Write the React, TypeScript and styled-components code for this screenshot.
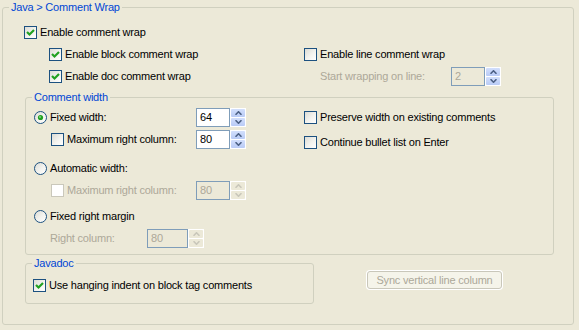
import React from "react";
import styled, { createGlobalStyle } from "styled-components";

const GlobalStyle = createGlobalStyle`
  html, body {
    margin: 0;
    padding: 0;
    background: #ece9d8;
  }
  body {
    font-family: "Liberation Sans", Arial, sans-serif;
    font-size: 11px;
    color: #000;
  }
`;

const Window = styled.div`
  padding: 1px 0 0 2px;
`;

// group box with blue title
const Group = styled.fieldset<{ $w: number }>`
  box-sizing: border-box;
  width: ${(p) => p.$w}px;
  margin: 0;
  padding: 0;
  min-width: 0;
  border: 1px solid #d0d0bf;
  border-radius: 3px;
`;

const Legend = styled.legend`
  margin-left: 6px;
  padding: 0 2px;
  line-height: 13px;
  color: #0046d5;
  letter-spacing: -0.2px;
`;

const OuterBody = styled.div`
  padding: 7px 0 20px 21px;
`;

const TopGrid = styled.div`
  display: grid;
  grid-template-columns: 280px 1fr;
`;

const Column = styled.div`
  display: flex;
  flex-direction: column;
`;

const WidthGroup = styled(Group)`
  margin: 4px 0 0 1px;
`;

const WidthBody = styled.div`
  display: grid;
  grid-template-columns: 270px 1fr;
  padding: 2px 0 5px 8px;
`;

const Row = styled.div<{ $indent?: number; $mt?: number }>`
  display: flex;
  align-items: center;
  height: 22px;
  padding-left: ${(p) => p.$indent ?? 0}px;
  margin-top: ${(p) => p.$mt ?? 0}px;
`;

const Lead = styled.div<{ $w: number }>`
  display: flex;
  align-items: center;
  width: ${(p) => p.$w}px;
`;

const Label = styled.span<{ $disabled?: boolean }>`
  margin-left: 3px;
  white-space: nowrap;
  letter-spacing: -0.2px;
  color: ${(p) => (p.$disabled ? "#aca899" : "#000")};
`;

const PlainLabel = styled(Label)`
  margin-left: 0;
`;

const Box = styled.span<{ $disabled?: boolean; $round?: boolean }>`
  box-sizing: border-box;
  display: inline-flex;
  align-items: center;
  justify-content: center;
  flex: none;
  width: 13px;
  height: 13px;
  border: 1px solid ${(p) => (p.$disabled ? "#cac8bb" : "#1c5180")};
  border-radius: ${(p) => (p.$round ? "50%" : "0")};
  background: ${(p) =>
    p.$disabled ? "#fff" : "linear-gradient(135deg, #dcdcd5 0%, #f3f3ef 55%, #ffffff 100%)"};
`;

const BottomRow = styled.div`
  display: flex;
  align-items: flex-start;
  margin-top: 2px;
`;

const JavadocGroup = styled(Group)`
  margin-left: 1px;
`;

const JavadocBody = styled.div`
  padding: 4px 0 7px 7px;
`;

const SyncButton = styled.button`
  box-sizing: border-box;
  width: 135px;
  height: 18px;
  margin: 14px 0 0 53px;
  padding: 0;
  border: 1px solid #c9c7ba;
  border-radius: 3px;
  box-shadow: 0 0 0 1px #fff;
  background: #f5f4ea;
  color: #aca899;
  font-family: inherit;
  font-size: 11px;
  letter-spacing: -0.2px;
`;

const SpinBox = styled.div`
  display: flex;
  align-items: stretch;
  height: 19px;
`;

const SpinField = styled.div<{ $w: number; $disabled?: boolean }>`
  box-sizing: border-box;
  width: ${(p) => p.$w}px;
  height: 19px;
  padding: 0 0 0 3px;
  line-height: 17px;
  border: 1px solid #7f9db9;
  background: ${(p) => (p.$disabled ? "#ece9d8" : "#fff")};
  color: ${(p) => (p.$disabled ? "#aca899" : "#000")};
`;

const SpinButtons = styled.div<{ $disabled?: boolean }>`
  box-sizing: border-box;
  display: flex;
  flex-direction: column;
  width: 16px;
  border: 1px solid #fff;
  background: #fff;
  gap: 1px;
`;

const SpinBtn = styled.div<{ $disabled?: boolean }>`
  flex: 1;
  display: flex;
  align-items: center;
  justify-content: center;
  border-radius: 1px;
  background: ${(p) =>
    p.$disabled ? "#ece9d8" : "linear-gradient(#d2dffc, #b9cbf6)"};
`;

const CheckMark = () => (
  <svg width="11" height="11" viewBox="0 0 11 11">
    <polyline points="2,5 4.5,7.5 9,3" fill="none" stroke="#21a121" strokeWidth="2.2" />
  </svg>
);

const Dot = () => (
  <svg width="11" height="11" viewBox="0 0 11 11">
    <circle cx="5.5" cy="5.5" r="2.6" fill="#21a121" />
    <circle cx="5" cy="5" r="1" fill="#7fd47f" />
  </svg>
);

const Arrow = ({ up, disabled }: { up?: boolean; disabled?: boolean }) => (
  <svg width="7" height="4" viewBox="0 0 7 4">
    <polyline
      points={up ? "0.5,3.8 3.5,0.8 6.5,3.8" : "0.5,0.2 3.5,3.2 6.5,0.2"}
      fill="none"
      stroke={disabled ? "#c9c7ba" : "#4d6185"}
      strokeWidth="1.6"
    />
  </svg>
);

type SpinnerProps = { value: string; w?: number; disabled?: boolean; dimArrows?: boolean };

const Spinner = ({ value, w = 34, disabled, dimArrows }: SpinnerProps) => (
  <SpinBox>
    <SpinField $w={w} $disabled={disabled}>{value}</SpinField>
    <SpinButtons>
      <SpinBtn $disabled={dimArrows}><Arrow up disabled={dimArrows} /></SpinBtn>
      <SpinBtn $disabled={dimArrows}><Arrow disabled={dimArrows} /></SpinBtn>
    </SpinButtons>
  </SpinBox>
);

type OptProps = { label: string; checked?: boolean; disabled?: boolean };

const CheckOpt = ({ label, checked, disabled }: OptProps) => (
  <>
    <Box $disabled={disabled}>{checked && <CheckMark />}</Box>
    <Label $disabled={disabled}>{label}</Label>
  </>
);

const RadioOpt = ({ label, checked }: OptProps) => (
  <>
    <Box $round>{checked && <Dot />}</Box>
    <Label>{label}</Label>
  </>
);

export default function App() {
  return (
    <Window>
      <GlobalStyle />
      <Group $w={572}>
        <Legend>Java &gt; Comment Wrap</Legend>
        <OuterBody>
          <TopGrid>
            <Column>
              <Row><CheckOpt label="Enable comment wrap" checked /></Row>
              <Row $indent={25}><CheckOpt label="Enable block comment wrap" checked /></Row>
              <Row $indent={25}><CheckOpt label="Enable doc comment wrap" checked /></Row>
            </Column>
            <Column>
              <Row />
              <Row><CheckOpt label="Enable line comment wrap" /></Row>
              <Row $indent={16}>
                <Lead $w={131}><PlainLabel $disabled>Start wrapping on line:</PlainLabel></Lead>
                <Spinner value="2" disabled />
              </Row>
            </Column>
          </TopGrid>

          <WidthGroup $w={529}>
            <Legend>Comment width</Legend>
            <WidthBody>
              <Column>
                <Row>
                  <Lead $w={162}><RadioOpt label="Fixed width:" checked /></Lead>
                  <Spinner value="64" />
                </Row>
                <Row $indent={17}>
                  <Lead $w={145}><CheckOpt label="Maximum right column:" /></Lead>
                  <Spinner value="80" />
                </Row>
                <Row $mt={7}><RadioOpt label="Automatic width:" /></Row>
                <Row $indent={17}>
                  <Lead $w={145}><CheckOpt label="Maximum right column:" disabled /></Lead>
                  <Spinner value="80" disabled dimArrows />
                </Row>
                <Row $mt={4}><RadioOpt label="Fixed right margin" /></Row>
                <Row $indent={16}>
                  <Lead $w={97}><PlainLabel $disabled>Right column:</PlainLabel></Lead>
                  <Spinner value="80" w={41} disabled dimArrows />
                </Row>
              </Column>
              <Column>
                <Row><CheckOpt label="Preserve width on existing comments" /></Row>
                <Row $mt={3}><CheckOpt label="Continue bullet list on Enter" /></Row>
              </Column>
            </WidthBody>
          </WidthGroup>

          <BottomRow>
            <JavadocGroup $w={289}>
              <Legend>Javadoc</Legend>
              <JavadocBody>
                <Row><CheckOpt label="Use hanging indent on block tag comments" checked /></Row>
              </JavadocBody>
            </JavadocGroup>
            <SyncButton disabled>Sync vertical line column</SyncButton>
          </BottomRow>
        </OuterBody>
      </Group>
    </Window>
  );
}
